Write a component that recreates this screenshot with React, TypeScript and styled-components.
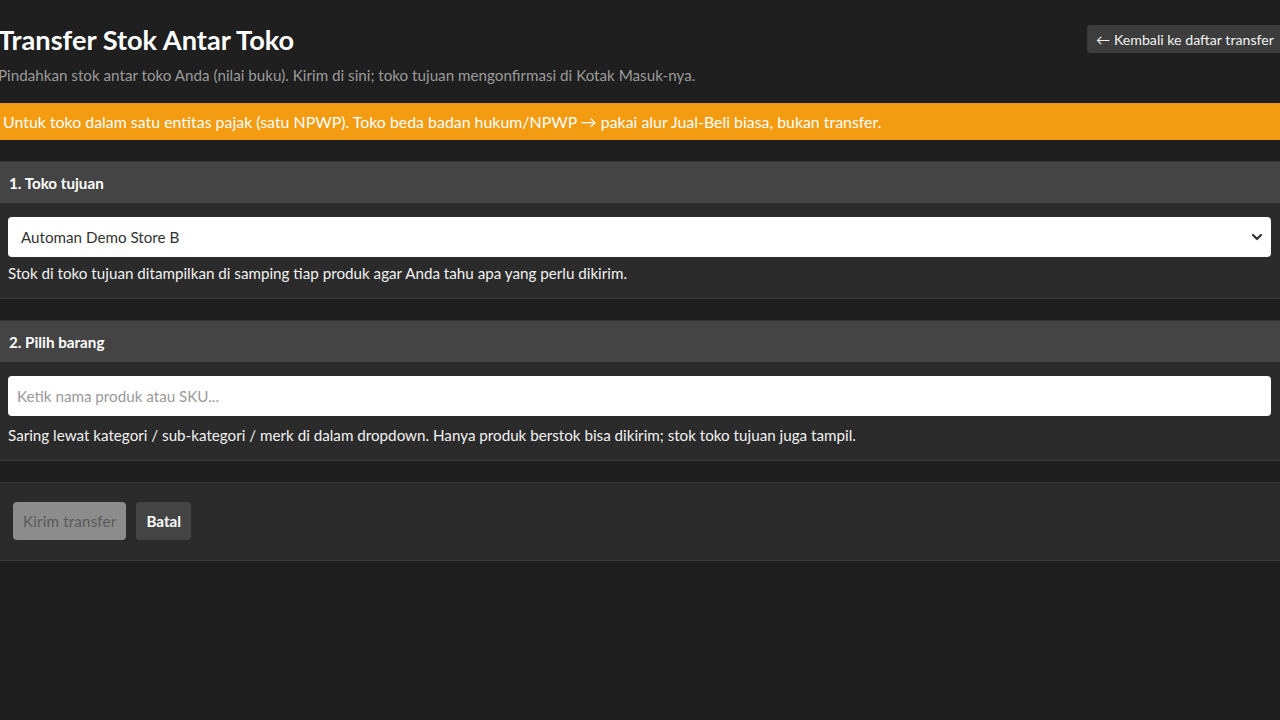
import React from "react";
import styled, { createGlobalStyle } from "styled-components";

const GlobalStyle = createGlobalStyle`
  html, body {
    margin: 0;
    padding: 0;
    background: #1f1f1f;
    font-family: Lato, "Open Sans", sans-serif;
    color: #ffffff;
    overflow: hidden;
  }
`;

const Page = styled.div`
  width: 1280px;
  min-height: 720px;
  background: #1f1f1f;
`;

const Header = styled.div`
  display: flex;
  justify-content: space-between;
  align-items: flex-start;
  padding-top: 23px;
`;

const TitleBlock = styled.div`
  margin-left: -2px;
`;

const Title = styled.h1`
  margin: 0;
  font-size: 27.2px;
  font-weight: 700;
  line-height: 33px;
  color: #ffffff;
`;

const Subtitle = styled.p`
  margin: 11px 0 0;
  font-size: 15.2px;
  line-height: 17px;
  color: #9b9b9b;
`;

const BackButton = styled.button`
  margin-top: 2px;
  height: 28px;
  padding: 0 6px 0 9px;
  border: none;
  border-radius: 4px 0 0 4px;
  background: #3d3d3d;
  color: #f2f2f2;
  font-family: inherit;
  font-size: 14.2px;
`;

const Alert = styled.div`
  margin-top: 19px;
  height: 37px;
  padding: 0 3px;
  display: flex;
  align-items: center;
  background: #f39c12;
  color: #ffffff;
  font-size: 15.9px;
`;

const Card = styled.section`
  margin-top: 21px;
  background: #2b2b2b;
  border-top: 1px solid #333;
  border-bottom: 1px solid #3a3a3a;
`;

const CardHeader = styled.div`
  height: 41px;
  padding: 0 9px;
  display: flex;
  align-items: center;
  background: #444444;
  font-size: 15.2px;
  font-weight: 700;
`;

const CardBody = styled.div`
  padding: 14px 9px 16px 8px;
`;

const SelectBox = styled.div`
  height: 40px;
  padding: 0 8px 0 13px;
  display: flex;
  align-items: center;
  justify-content: space-between;
  background: #ffffff;
  border-radius: 4px;
  color: #333333;
  font-size: 15.2px;
`;

const Input = styled.input`
  box-sizing: border-box;
  width: 100%;
  height: 40px;
  padding: 0 9px;
  display: block;
  border: none;
  border-radius: 4px;
  background: #ffffff;
  font-family: inherit;
  font-size: 15.2px;
  color: #333;
  &::placeholder {
    color: #999999;
  }
`;

const Help = styled.p<{ $gap?: number }>`
  margin: ${({ $gap }) => $gap ?? 7}px 0 0;
  font-size: 15.2px;
  line-height: 18px;
  color: #f2f2f2;
`;

const Actions = styled.div`
  display: flex;
  gap: 10px;
  padding: 19px 13px 20px;
`;

const Btn = styled.button<{ $variant: "disabled" | "dark" }>`
  height: 38px;
  padding: 0 10px;
  border: none;
  border-radius: 4px;
  font-family: inherit;
  font-size: 15.2px;
  background: ${({ $variant }) => ($variant === "disabled" ? "#8c8c8c" : "#444444")};
  color: ${({ $variant }) => ($variant === "disabled" ? "#5a5a5a" : "#ffffff")};
  font-weight: ${({ $variant }) => ($variant === "disabled" ? 400 : 700)};
  letter-spacing: ${({ $variant }) => ($variant === "disabled" ? "0.15px" : "0")};
`;

const Chevron = () => (
  <svg width="12" height="12" viewBox="0 0 12 12">
    <path d="M2 4l4 4 4-4" fill="none" stroke="#333" strokeWidth="2.2" strokeLinecap="round" strokeLinejoin="round" />
  </svg>
);

export default function App() {
  return (
    <Page>
      <GlobalStyle />
      <Header>
        <TitleBlock>
          <Title>Transfer Stok Antar Toko</Title>
          <Subtitle>
            Pindahkan stok antar toko Anda (nilai buku). Kirim di sini; toko tujuan mengonfirmasi di Kotak Masuk-nya.
          </Subtitle>
        </TitleBlock>
        <BackButton>← Kembali ke daftar transfer</BackButton>
      </Header>
      <Alert>
        Untuk toko dalam satu entitas pajak (satu NPWP). Toko beda badan hukum/NPWP → pakai alur Jual-Beli biasa, bukan transfer.
      </Alert>
      <Card>
        <CardHeader>1. Toko tujuan</CardHeader>
        <CardBody>
          <SelectBox>
            <span>Automan Demo Store B</span>
            <Chevron />
          </SelectBox>
          <Help>Stok di toko tujuan ditampilkan di samping tiap produk agar Anda tahu apa yang perlu dikirim.</Help>
        </CardBody>
      </Card>
      <Card>
        <CardHeader>2. Pilih barang</CardHeader>
        <CardBody>
          <Input placeholder="Ketik nama produk atau SKU..." />
          <Help $gap={10}>
            Saring lewat kategori / sub-kategori / merk di dalam dropdown. Hanya produk berstok bisa dikirim; stok toko tujuan juga tampil.
          </Help>
        </CardBody>
      </Card>
      <Card>
        <Actions>
          <Btn $variant="disabled">Kirim transfer</Btn>
          <Btn $variant="dark">Batal</Btn>
        </Actions>
      </Card>
    </Page>
  );
}
